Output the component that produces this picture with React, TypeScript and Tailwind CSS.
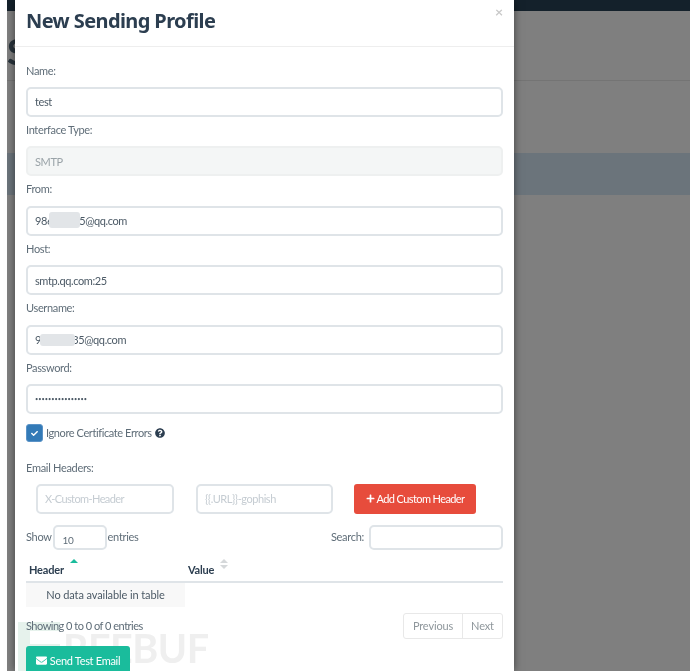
import { FaCheck, FaEnvelope, FaPlus, FaQuestionCircle } from "react-icons/fa";

const fields = [
  { label: "Name:", value: "test" },
  { label: "Interface Type:", value: "SMTP", disabled: true },
  { label: "From:", value: "986xxxx35@qq.com", blob: "left-[23px] w-[31px] top-[6px] h-[16px]" },
  { label: "Host:", value: "smtp.qq.com:25" },
  { label: "Username:", value: "98xxxxx35@qq.com", blob: "left-[14px] w-[35px] top-[9px] h-[12px]" },
  { label: "Password:", value: "testpassword1234", type: "password" },
];

function Field({ label, value, disabled, type, blob }: { label: string; value: string; disabled?: boolean; type?: string; blob?: string }) {
  return (
    <div>
      <label className="flex h-[29.4px] items-start pt-[5px] text-[11px] tracking-[-0.35px] text-[#5f6d78]">{label}</label>
      <div className="relative">
        <input
          readOnly
          type={type || "text"}
          value={value}
          disabled={disabled}
          className={`block h-[30px] w-full rounded-[5px] border-2 px-[7px] outline-none ${type === "password" ? "text-[5.6px]" : "text-[11px] tracking-[-0.4px]"} ${
            disabled ? "border-[#eef0f0] bg-[#f4f6f6] text-[#9aa3a8]" : "border-[#dfe4e8] bg-white text-[#4c5a66]"
          }`}
        />
        {blob && <div className={`absolute rounded-[3px] bg-[#e2e5e8] ${blob}`} />}
      </div>
    </div>
  );
}

export default function App() {
  return (
    <div className="relative h-[671px] w-[690px] overflow-hidden bg-white font-['Lato',sans-serif] blur-[0.4px]">
      {/* page behind the modal */}
      <div className="ml-[7px] h-full bg-[#7f7f7f]">
        <div className="h-[11px] bg-[#14212b]" />
        <div className="h-[70px] border-b border-[#747474] pt-[22px] text-[36px] font-bold leading-none text-[#28333b]">S</div>
        <div className="mt-[72px] h-[42px] bg-[#6b747b]" />
      </div>

      {/* modal */}
      <div className="absolute left-[15px] top-0 h-full w-[499px] bg-white shadow-[0_0_8px_rgba(0,0,0,0.5)]">
        {/* freebuf watermark */}
        <div className="pointer-events-none absolute left-[3px] top-[622px]">
          <svg viewBox="0 0 42 49" className="h-[49px] w-[42px]">
            <path d="M0 0h42v9H12v13h30v6H12v21H0z" fill="#e6f2ec" />
          </svg>
        </div>
        <div className="pointer-events-none absolute left-[48px] top-[628px] text-[39.5px] font-bold leading-none tracking-[-0.5px] text-[#efefef]">REEBUF</div>

        <div className="relative flex h-[47px] items-start justify-between border-b border-[#eeeeee] pl-[11px] pr-[11px]">
          <h4 className="mt-[6px] font-['Noto_Sans',sans-serif] text-[20px] font-bold leading-[30px] tracking-[-0.6px] text-[#2c3e50]">New Sending Profile</h4>
          <span className="mt-[3px] text-[14px] font-bold leading-[18px] text-[#c9c9c9]">×</span>
        </div>

        <div className="relative px-[11px] pt-[10.6px]">
          {fields.map((f) => (
            <Field key={f.label} {...f} />
          ))}

          <div className="mt-[10px] flex h-[19px] items-center gap-[3px] text-[11px] tracking-[-0.4px] text-[#5f6d78]">
            <span className="flex h-[18px] w-[17px] items-center justify-center rounded-[3px] border border-[#5b93c7] bg-[#337ab7]">
              <FaCheck className="text-[7px] text-white" />
            </span>
            <span>Ignore Certificate Errors</span>
            <FaQuestionCircle className="text-[10px] text-[#2c3e50]" />
          </div>

          <div className="mt-[16px] h-[25px] pt-[1px] text-[11px] tracking-[-0.3px] text-[#5f6d78]">Email Headers:</div>

          <div className="flex h-[30px] pl-[10px] text-[11px]">
            <input readOnly placeholder="X-Custom-Header" className="h-[30px] w-[138px] rounded-[5px] border-2 border-[#dfe4e8] px-[7px] tracking-[-0.6px] outline-none placeholder:text-[#c5ccd2]" />
            <input readOnly placeholder="{{.URL}}-gophish" className="ml-[22px] h-[30px] w-[137px] rounded-[5px] border-2 border-[#dfe4e8] px-[7px] tracking-[-0.45px] outline-none placeholder:text-[#c5ccd2]" />
            <button className="ml-[21px] flex h-[30px] w-[122px] items-center justify-center gap-[2px] rounded-[3px] bg-[#e74c3c] tracking-[-0.6px] text-white">
              <FaPlus className="text-[9px]" />
              Add Custom Header
            </button>
          </div>

          <div className="mt-[11px] flex h-[25px] items-center justify-between text-[11px] tracking-[-0.3px] text-[#5f6d78]">
            <div className="flex items-center">
              Show
              <span className="mx-[1px] flex h-[25px] w-[54px] items-end rounded-[5px] border-2 border-[#dfe4e8] pl-[8px] text-[10px]">10</span>
              entries
            </div>
            <div className="flex items-center gap-[5px]">
              Search:
              <input readOnly className="h-[25px] w-[134px] rounded-[5px] border-2 border-[#dfe4e8] outline-none" />
            </div>
          </div>

          <div className="mt-[7px] flex h-[26px] items-end border-b-2 border-[#dfe4e8] pb-[2px] pl-[3px] text-[11px] font-bold tracking-[-0.2px] text-[#2c3e50]">
            <span className="relative w-[159px]">
              Header
              <svg viewBox="0 0 8 4" className="absolute left-[41px] top-[-3px] h-[4px] w-[8px]">
                <path d="M0 4 4 0l4 4z" fill="#1abc9c" />
              </svg>
            </span>
            <span className="relative">
              Value
              <svg viewBox="0 0 8 10" className="absolute left-[32px] top-[-3px] h-[10px] w-[8px]">
                <path d="M0 4 4 0l4 4zM0 6h8l-4 4z" fill="#d5d8da" />
              </svg>
            </span>
          </div>
          <div className="flex h-[24px] w-[159px] items-center justify-center bg-[#f8f8f8] text-[11px] tracking-[-0.1px] text-[#4c5a66]">No data available in table</div>

          <div className="mt-[6px] flex h-[26px] items-center justify-between text-[11px] text-[#5f6d78]">
            <span className="tracking-[-0.5px]">Showing 0 to 0 of 0 entries</span>
            <div className="flex h-[26px] rounded-[3px] border border-[#e8e8e8] tracking-[-0.15px] text-[#8f979c]">
              <span className="flex w-[59px] items-center justify-center border-r border-[#e8e8e8]">Previous</span>
              <span className="flex w-[39px] items-center justify-center">Next</span>
            </div>
          </div>

          <button className="mt-[7px] flex h-[30px] w-[104px] items-center justify-center gap-[3px] rounded-[3px] bg-[#1abc9c] text-[11px] tracking-[-0.3px] text-white">
            <FaEnvelope className="text-[11px]" />
            Send Test Email
          </button>
        </div>
      </div>
    </div>
  );
}
